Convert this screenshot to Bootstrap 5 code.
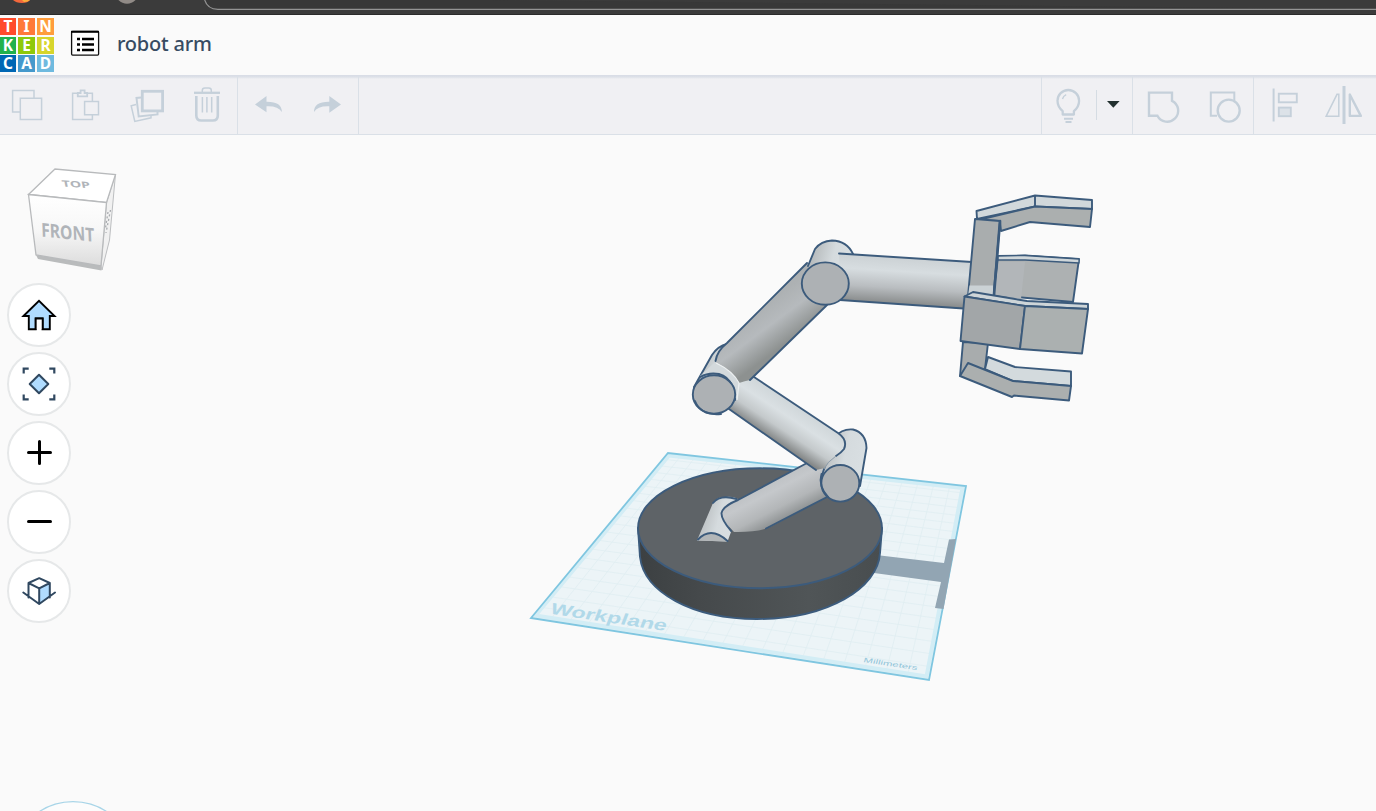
<!DOCTYPE html>
<html lang="en">
<head>
<meta charset="utf-8">
<meta name="viewport" content="width=device-width, initial-scale=1">
<title>robot arm</title>
<link href="https://cdn.jsdelivr.net/npm/bootstrap@5.3.0/dist/css/bootstrap.min.css" rel="stylesheet">
<style>
body{height:811px;background:#fafafa;font-family:"Noto Sans","Open Sans",sans-serif;overflow:hidden}
svg{display:block}
.browser-strip{height:15px;background:#3b3b3b}
.app-header{height:60px;background:#fafafa}
.logo-grid{display:grid;grid-template:17px 17px 17px/16px 17px 17px;gap:1.5px 2px;width:54px;height:54px}
.logo-grid span{color:#fff;font-weight:700;font-size:15.5px;line-height:16px;text-align:center}
.list-icon{margin-left:16px;margin-top:-4px}
.design-name{font-size:20px;line-height:28px;color:#374b62;font-weight:500;letter-spacing:-.22px;margin:-2px 0 0 17px;white-space:nowrap}
.tool-row{height:60px;padding-top:1px;background:linear-gradient(#d8dce5,#dde1e8 2px,#f0f0f3 4px);border-bottom:1px solid #dae0e7}
.tool-set{border-right:1px solid #dae0e7}
.tool-set.start-line{border-left:1px solid #dae0e7}
.tool-row .btn{padding:0;border:0;border-radius:0}
.tool-row svg{fill:none;stroke:#c5d0da;stroke-width:1.5}
.first-tool{margin-left:-3px}
.bar-split{width:1px;height:30px;background:#d5dce3}
.stage-area{height:676px;background:#fafafa}
.nav-col{left:7px;top:148px;gap:5px}
.round-btn{width:64px;height:64px;border:2px solid #e6e8e9;background:#fff;padding:0}
.edge{stroke:#3c5b7c;stroke-width:1.9;stroke-linejoin:round;stroke-linecap:round}
</style>
</head>
<body class="d-flex flex-column">
<div class="browser-strip flex-shrink-0">
<svg width="1376" height="15" viewBox="0 0 1376 15"><path d="M13 0h17q-2 3-8 3-6 0-9-3z" fill="#f4683c"/><path d="M22 0h8q-2 2-6 2z" fill="#fbb03b"/><circle cx="127" cy="-8" r="11.7" fill="#918b87"/><path d="M204 -3Q206 9.3 218 9.3H1378" fill="#383838" stroke="#949494" stroke-width="1.2"/><path d="M0 14.6H1376" stroke="#292929"/></svg>
</div>
<header class="app-header d-flex align-items-center flex-shrink-0">
<div class="logo-grid flex-shrink-0" aria-label="Tinkercad">
<span style="background:#ff4b2b">T</span><span style="background:#ff7939">I</span><span style="background:#ff9d3c">N</span>
<span style="background:#22b14c">K</span><span style="background:#8fc90a">E</span><span style="background:#d7d52c">R</span>
<span style="background:#0067b4">C</span><span style="background:#4599cc">A</span><span style="background:#6fbadf">D</span>
</div>
<svg class="list-icon" width="30" height="26" viewBox="70 30 30 26"><rect x="71.6" y="31.3" width="27" height="23.8" rx="1" fill="#fff" stroke="#111" stroke-width="1.3"/><path d="M71 31.8h28" stroke="#000" stroke-width="2"/><path d="M77 39h3m2 0h12M77 44.5h3m2 0h12M77 50h3m2 0h12" stroke="#000" stroke-width="2.6"/></svg>
<div class="design-name">robot arm</div>
</header>
<div class="tool-row d-flex justify-content-between flex-shrink-0">
<div class="d-flex">
<div class="tool-set d-flex">
<button class="btn first-tool" aria-label="Copy"><svg width="60" height="58" viewBox="-3 76 60 58"><path d="M20 112H12.6V90.6H34V98M20.3 98.3H41.6V119.5H20.3z" stroke-width="1.5"/></svg></button>
<button class="btn" aria-label="Paste"><svg width="60" height="58" viewBox="57 76 60 58"><path d="M78 93.3H72.6V119.4H92.4V115M88 93.3H92.4V101M84.6 101.4H98.5V114.8H84.6z" stroke-width="1.5"/><path d="M77.8 93v3.4h9.4V93h-2.6v-2.6h-4V93z" stroke-width="1.8"/></svg></button>
<button class="btn" aria-label="Duplicate"><svg width="60" height="58" viewBox="117 76 60 58"><rect x="142.3" y="91.3" width="20.3" height="19.6" stroke-width="2.8"/><path d="M141 97.5l-4.5.5 2.2 18.5 18.8-2.1v-3" stroke-width="2"/><path d="M136 104.5l-4.8 1.3 3.6 15.6 16.2-3.6v-2" stroke-width="1.5"/></svg></button>
<button class="btn" aria-label="Delete"><svg width="60" height="58" viewBox="177 76 60 58"><path d="M194 92.8h26" stroke-width="2.3"/><path d="M202.3 92v-1.5q0-2.5 2.5-2.5h4q2.5 0 2.5 2.5V92M202.4 97v15.5M206.9 97v15.5M211.7 97v15.5" stroke-width="1.5"/><path d="M196.3 96v19.5q0 5 5 5h11.5q5 0 5-5V96" stroke-width="2.6"/></svg></button>
</div>
<div class="tool-set d-flex">
<button class="btn" aria-label="Undo"><svg width="60" height="58" viewBox="238 76 60 58"><path d="M255 104.4L266.5 96v5.8q15.5-.2 15.3 10.3-3.6-6.3-15.3-5.8v6z" fill="#c5d0da" stroke="none"/></svg></button>
<button class="btn" aria-label="Redo"><svg width="60" height="58" viewBox="298 76 60 58"><path d="M341 104.4L329.3 96v5.8q-15.5-.2-15.3 10.3 3.6-6.3 15.3-5.8v6.5z" fill="#c5d0da" stroke="none"/></svg></button>
</div>
</div>
<div class="d-flex" style="margin-right:2px">
<div class="tool-set start-line d-flex align-items-center">
<button class="btn" aria-label="Show"><svg width="54" height="58" viewBox="1042 76 54 58"><path d="M1062.7 114.5v-3.3q-5.2-4.4-5.2-10.4a10.8 10.8 0 0 1 21.6 0q0 6-5.2 10.4v3.3z" stroke-width="2.3" stroke-linejoin="round"/><path d="M1062.5 99q.7-3 3.7-4.3" stroke-width="1.4"/><path d="M1064 118.7h9M1065.5 122h6" stroke-width="2"/></svg></button>
<div class="bar-split"></div>
<button class="btn" aria-label="Show options"><svg width="35" height="58" viewBox="1097 76 35 58"><path d="M1107 101h12.6l-6.3 6.8z" fill="#22302f" stroke="none"/></svg></button>
</div>
<div class="tool-set d-flex">
<button class="btn" aria-label="Group"><svg width="60" height="58" viewBox="1133 76 60 58"><path d="M1149 92.6h23v8.2a11 11 0 1 1-14.6 14.9h-8.4z" stroke-width="2.4"/></svg></button>
<button class="btn" aria-label="Ungroup"><svg width="60" height="58" viewBox="1193 76 60 58"><path d="M1217 115.8h-6.2V92.6h23.5v8.2" stroke-width="2"/><circle cx="1228.7" cy="110.6" r="11" stroke-width="2.4"/></svg></button>
</div>
<div class="d-flex">
<button class="btn" aria-label="Align"><svg width="60" height="58" viewBox="1254 76 60 58"><path d="M1273.6 88.5v33" stroke-width="2"/><rect x="1278.8" y="93.7" width="18" height="8.6" stroke-width="1.9"/><rect x="1278.8" y="107.6" width="12" height="8.6" fill="#dce2e8" stroke-width="1.9"/></svg></button>
<button class="btn" aria-label="Mirror"><svg width="60" height="58" viewBox="1314 76 60 58"><path d="M1344 86v38" stroke-width="3"/><path d="M1326.2 116.2L1337 94.3h1.8v21.9z" stroke-width="1.5"/><path d="M1349.8 94.5v21.4h11z" stroke-width="2.4" stroke-linejoin="round"/></svg></button>
</div>
</div>
</div>
<main class="stage-area position-relative overflow-hidden">
<svg class="position-absolute top-0 start-0" width="1376" height="676" viewBox="0 135 1376 676">
<defs>
<linearGradient id="rim" x1="638" x2="882" y1="0" y2="0" gradientUnits="userSpaceOnUse"><stop stop-color="#3c4042"/><stop offset=".25" stop-color="#45494b"/><stop offset=".7" stop-color="#505557"/><stop offset="1" stop-color="#484d4f"/></linearGradient>
<linearGradient id="tubeA" x1="758" y1="480" x2="780" y2="523" gradientUnits="userSpaceOnUse"><stop stop-color="#b9bdc0"/><stop offset=".35" stop-color="#c5c8cb"/><stop offset=".7" stop-color="#b3b6b8"/><stop offset="1" stop-color="#8b8f90"/></linearGradient>
<linearGradient id="tubeB" x1="797" y1="405" x2="774" y2="440" gradientUnits="userSpaceOnUse"><stop stop-color="#cfd6d9"/><stop offset=".35" stop-color="#dae0e3"/><stop offset=".68" stop-color="#c4c9cb"/><stop offset="1" stop-color="#858888"/></linearGradient>
<linearGradient id="tubeC" x1="767" y1="303" x2="793" y2="338" gradientUnits="userSpaceOnUse"><stop stop-color="#adb1b3"/><stop offset=".45" stop-color="#b6babd"/><stop offset="1" stop-color="#8d9190"/></linearGradient>
<linearGradient id="tubeD" x1="902" y1="257" x2="899" y2="305" gradientUnits="userSpaceOnUse"><stop stop-color="#cbd1d4"/><stop offset=".3" stop-color="#d7dde0"/><stop offset=".65" stop-color="#b9bdc0"/><stop offset="1" stop-color="#858888"/></linearGradient>
<linearGradient id="knuckle" x1="0" x2="1" y1=".2" y2=".5"><stop stop-color="#aeb2b4"/><stop offset=".55" stop-color="#d5dbde"/><stop offset="1" stop-color="#d9dfe2"/></linearGradient>
</defs>
<path d="M531 618L668 453 966 486 929 680z" fill="#ecf4f7"/>
<g id="grid" stroke="#e0edf1" stroke-width=".8"></g>
<path d="M535.5 615.5L669 455.5 962.5 488 926.5 676.5z" fill="none" stroke="#d3edf5" stroke-width="4"/>
<path d="M531 618L668 453 966 486 929 680z" fill="none" stroke="#7fc6e0" stroke-width="1.8"/>
<text transform="matrix(1 .15 -.3 .78 549 613.5)" font-family="Liberation Sans" font-weight="700" font-size="19.5" fill="#b1d9e9" textLength="116" lengthAdjust="spacingAndGlyphs">Workplane</text>
<text transform="matrix(1 .15 -.2 .72 863 662)" font-family="Liberation Sans" font-size="9" fill="#91c5d9" textLength="54" lengthAdjust="spacingAndGlyphs">Millimeters</text>
<path d="M876 555L944 563 949 539.5 956 539 943.5 609 935 608 941 582 874 573z" fill="#92a5b3"/>
<g class="edge">
<path d="M638 528L640 557C644 592 692 619 757 619C828 619 878 588 880 553L882 528z" fill="url(#rim)"/>
<ellipse cx="760" cy="528.3" rx="122" ry="60" fill="#5e6367"/>
</g>
<!-- base stub and lower segment -->
<path d="M697 540.5L713 503Q717 496 726 497Q735 496 740 501L724 515 731 532 727.5 541.5z" fill="url(#knuckle)"/>
<path d="M697 540.5Q711 525 727.5 541.5z" fill="#b2b6b8"/>
<path class="edge" fill="none" d="M713 503Q720 494 736.5 499M698 539.5Q711 526 727.5 541"/>
<path d="M738 500L807 463 840 469 827 497 772 526Q761 532.500 734 532Q721 519 721.500 512Q723 506 738 500z" fill="url(#tubeA)"/>
<path class="edge" fill="none" d="M807 463L738 500Q723 506 721.500 513Q721 519 731 531M766 528.500L827 497"/>
<!-- lower elbow -->
<path class="edge" d="M821 478L835 437Q842 428.500 853 429.500Q866 433 866.500 448L860 486z" fill="url(#knuckle)"/>
<path d="M754 377L838 433Q848 440 844 449Q831 458 825 468L816 470 729 409 737 382z" fill="url(#tubeB)"/>
<path class="edge" fill="none" d="M754 377L838 433Q848 440 844 449Q841 453 836 456M729 409L816 470"/>
<path d="M836 456Q827 462 824 469" fill="none" stroke="#8c9caa" stroke-width="1"/>
<ellipse class="edge" cx="840.300" cy="483.300" rx="19" ry="18.300" fill="#adb1b4" stroke-width="2.500"/>
<path class="edge" fill="none" d="M821.500 474Q818 486 828 497"/>
<!-- middle elbow -->
<path class="edge" d="M694 387L712 355Q718 346 727 344L738 378 735 400z" fill="url(#knuckle)"/>
<path d="M727 343L807 263 842 280 827 305 750 380Q745 381 739 383Q728 369 715 362Q717 351 727 343z" fill="url(#tubeC)"/>
<path class="edge" fill="none" d="M715.500 361Q717 351 727 343L807 263M827 305L750 380"/>
<path d="M715 362Q732 370 739 383L738 400 725 389 700 376z" fill="#d3d9dc"/>
<path d="M716 363Q733 371 739 383L737 400" fill="none" stroke="#edf0f1" stroke-width="1.200"/>
<path class="edge" fill="none" d="M700 377Q709 372 719 374Q728 376 733 387"/>
<ellipse class="edge" cx="714" cy="394.500" rx="21.200" ry="19.200" fill="#adb1b4"/>
<path class="edge" fill="none" d="M695 401Q701 416 721 414"/>
<!-- upper elbow and forearm -->
<path d="M808 266L815 249Q821 241 832 240.500Q847 241 853 256L848 289z" fill="url(#knuckle)"/>
<path class="edge" fill="none" d="M808 266L815 249Q821 241 832 240.500Q847 241 853 254"/>
<path d="M839 253.500L972 262 967 309 840 300z" fill="url(#tubeD)"/>
<path class="edge" fill="none" d="M839 253.500L972 262M967 308.800L840 300"/>
<ellipse class="edge" cx="825.300" cy="283.600" rx="23.500" ry="21.200" fill="#adb1b4"/>
<!-- gripper -->
<g class="edge">
<path d="M998 256L1025 255.500 1079 259 1073 302 994 295z" fill="#adb1b2"/>
<path d="M999 262h26l-4 37-27-4z" fill="#b2b6b9" stroke="none"/>
<path d="M998 256L1025 255.500 1079 259V263L1025 260H998z" fill="#d0d7da" stroke-width="1.300"/>
<path d="M977 219L976.500 211 1035 195.500 1092 200V209L1035 206.500z" fill="#d1d8db"/>
<path d="M978 220L1035 206.500 1092 209 1090 227 1030 222 1001 231 1000 221z" fill="#abafaf"/>
<path d="M1035 196v10" fill="none"/>
<path d="M975 219L1000 221 993.500 296H968z" fill="#a9adae"/>
<path d="M969.500 285.500H993V296H968z" fill="#cbd2d5" stroke="none"/>
<path d="M1000 221L994 295" fill="none" stroke-width="2.700"/>
<path d="M963 342L988 343 985 369 960 376z" fill="#a8acad"/>
<path d="M988 357L1015 367 1071 371.500V386L1013 381 985 369z" fill="#d3dadd"/>
<path d="M968 363L1013 381 1071 386 1069 400.500 1014 395.500 1012 397 960 376z" fill="#abafaf"/>
<path d="M964.500 296.500L973 292 1027 301 1088 304V309L1025 306z" fill="#ced5d8"/>
<path d="M964.500 296.500L1025 306 1020 349 960.500 341z" fill="#a2a6a8"/>
<path d="M1025 306L1088 309 1082 353.500 1020 349z" fill="#abb0b0"/>
</g>
<circle cx="73" cy="862.600" r="61" fill="#fcfcfc" stroke="#a8d5e8" stroke-width="1.300"/>
</svg>
<svg class="position-relative" width="140" height="148" viewBox="0 135 140 148" role="img" aria-label="View cube">
<defs><linearGradient id="face" x2="0" y2="1"><stop stop-color="#fff"/><stop offset=".5" stop-color="#f7f7f7"/><stop offset="1" stop-color="#dcdcdc"/></linearGradient></defs>
<path d="M36 255L101 265 101.500 270.500 38 259z" fill="#b9bbbc"/>
<path d="M101 266L106.500 202.500 115.500 174 109.500 240 102 270z" fill="#f1f1f1" stroke="#bcbec0"/>
<path d="M28.500 194.500L55 169 115.500 174.500 106.500 202.500z" fill="#fff" stroke="#b8babc" stroke-width="1.300"/>
<path d="M28.500 194.500L106.500 202.500 101 266 36 255z" fill="url(#face)" stroke="#b8babc" stroke-width="1.300"/>
<text transform="matrix(1 .1 .04 1 41.500 236.500)" font-family="Noto Sans" font-weight="700" font-size="19" fill="#b0b4b9" textLength="53" lengthAdjust="spacingAndGlyphs">FRONT</text>
<text transform="matrix(1 .06 .12 .58 62.500 186.500)" font-family="Noto Sans" font-weight="700" font-size="15" fill="#b0b4b9" textLength="28" lengthAdjust="spacingAndGlyphs">TOP</text>
<path d="M110.500 210L106 233M108 212L105.500 228" stroke="#a9acb0" stroke-width="1.300" stroke-dasharray="2 2.500"/>
</svg>
<nav class="nav-col position-absolute d-flex flex-column">
<button class="btn round-btn rounded-circle" aria-label="Home view"><svg width="60" height="60" viewBox="9 285 60 60"><path d="M23.500 316L39 300.800 54.500 316H49.800V329.200H42.500V318.500H35.700V329.200H28.800V316z" fill="#b0dcff" stroke="#000" stroke-width="1.900"/><path d="M36 319h6v10.500h-6z" fill="#fff"/><path d="M35.700 330v-11.500h7V330" fill="none" stroke="#000" stroke-width="1.900"/></svg></button>
<button class="btn round-btn rounded-circle" aria-label="Fit view"><svg width="60" height="60" viewBox="9 354 60 60"><path d="M39 374.700L48.300 384 39 393.300 29.700 384z" fill="#b0dcff" stroke="#304860" stroke-width="2" stroke-linejoin="round"/><path d="M23.700 373.500v-4.800h5M49.300 368.700h5v4.800M23.700 394.500v4.800h5M49.300 399.300h5v-4.800" fill="none" stroke="#304860" stroke-width="2.200"/></svg></button>
<button class="btn round-btn rounded-circle" aria-label="Zoom in"><svg width="60" height="60" viewBox="9 423 60 60"><path d="M28.500 452.500h22M39.500 441.500v22" stroke="#000" stroke-width="3" stroke-linecap="round"/></svg></button>
<button class="btn round-btn rounded-circle" aria-label="Zoom out"><svg width="60" height="60" viewBox="9 492 60 60"><path d="M28.500 521.500h22" stroke="#000" stroke-width="3" stroke-linecap="round"/></svg></button>
<button class="btn round-btn rounded-circle" aria-label="Perspective"><svg width="60" height="60" viewBox="9 561 60 60"><path d="M39.200 588.300L49.800 583V597L39.200 604z" fill="#b0dcff"/><path d="M28.500 583L39.200 578.200 49.800 583 39.200 588.300zM28.500 583V597.500M49.800 583V597.500M39.200 588.300V603.500M23.300 592.500L39.200 604 55 592.500" fill="none" stroke="#304860" stroke-width="2" stroke-linejoin="round" stroke-linecap="round"/></svg></button>
</nav>
</main>
<script>
// Perspective grid: maps the unit square onto the workplane's four corners
const A=[531,618],B=[929,680],C=[966,486],D=[668,453];
const dx1=B[0]-C[0],dx2=D[0]-C[0],sx=A[0]-B[0]+C[0]-D[0];
const dy1=B[1]-C[1],dy2=D[1]-C[1],sy=A[1]-B[1]+C[1]-D[1];
const den=dx1*dy2-dx2*dy1,g=(sx*dy2-dx2*sy)/den,h=(dx1*sy-sx*dy1)/den;
const map=(u,v)=>{const w=g*u+h*v+1;return [((B[0]-A[0]+g*B[0])*u+(D[0]-A[0]+h*D[0])*v+A[0])/w,((B[1]-A[1]+g*B[1])*u+(D[1]-A[1]+h*D[1])*v+A[1])/w]};
let d='';
for(let i=1;i<20;i++){const t=i/20;d+='M'+map(t,0)+'L'+map(t,1)+'M'+map(0,t)+'L'+map(1,t);}
const p=document.createElementNS('http://www.w3.org/2000/svg','path');
p.setAttribute('d',d);document.getElementById('grid').append(p);
</script>
<script src="https://cdn.jsdelivr.net/npm/bootstrap@5.3.0/dist/js/bootstrap.bundle.min.js"></script>
</body>
</html>
